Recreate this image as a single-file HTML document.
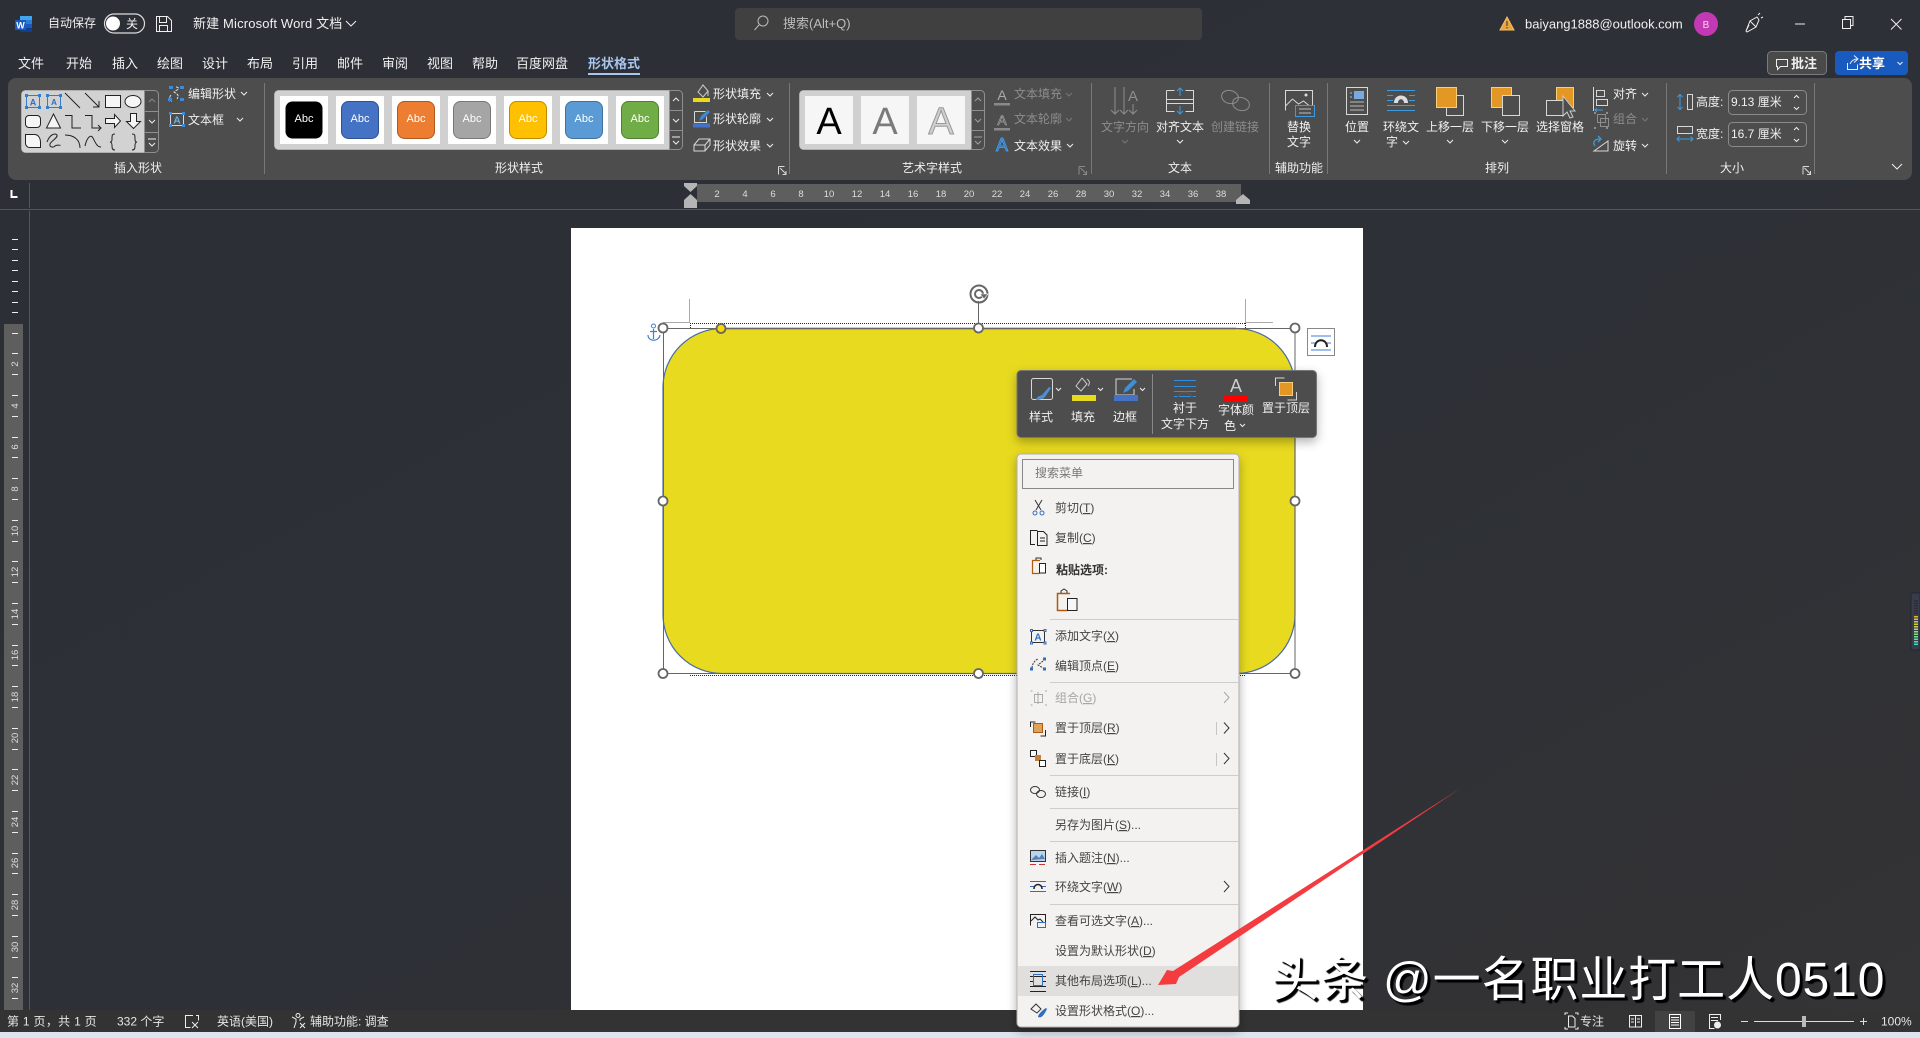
<!DOCTYPE html>
<html lang="zh"><head><meta charset="utf-8"><title>新建 Microsoft Word 文档</title>
<style>
html,body{margin:0;padding:0;width:1920px;height:1038px;overflow:hidden;background:#2c2f36}
svg{position:absolute;left:0;top:0;display:block}
text{font-family:"Liberation Sans","Noto Sans CJK SC",sans-serif;font-size:12px;fill:#f0f0f0}
.m{text-anchor:middle}
.d{fill:#8d8d8d}
.k{fill:#444}
.g{fill:#a8a6a4}
.c{fill:none;stroke:#eee;stroke-width:1}
.b{fill:none;stroke:#222;stroke-width:1}
.s{fill:none;stroke:#d8d8d8;stroke-width:1}
.i{fill:none;stroke:#333;stroke-width:1}
.sp{stroke:#777;stroke-width:1}
.u{text-decoration:underline}
.n{font-size:9.5px;fill:#ddd;text-anchor:middle}
.h{fill:#fff;stroke:#666;stroke-width:1.8}
#wm{position:absolute;left:1271px;top:948px;font:48px/66px "Liberation Sans","Noto Sans CJK SC",sans-serif;letter-spacing:.9px;color:#fff;white-space:pre;text-shadow:2px 2px 1px #000,3px 3px 1px #000}
</style></head><body>
<svg width="1920" height="1038" viewBox="0 0 1920 1038" xmlns="http://www.w3.org/2000/svg">
<defs><linearGradient id="bg" x1="0" y1="0" x2="1" y2="1"><stop offset="0" stop-color="#2c2f36"/><stop offset=".55" stop-color="#2d3036"/><stop offset="1" stop-color="#343335"/></linearGradient>
<filter id="sh" x="-10%" y="-20%" width="120%" height="150%"><feDropShadow dx="0" dy="4" stdDeviation="5" flood-color="#000" flood-opacity=".3"/></filter></defs>
<rect width="1920" height="1038" fill="url(#bg)"/>

<!-- title bar -->
<rect x="20" y="16" width="12" height="4" fill="#41a5ee"/><rect x="20" y="20" width="12" height="4" fill="#2b7cd3"/><rect x="20" y="24" width="12" height="4" fill="#185abd"/><rect x="20" y="28" width="12" height="4" fill="#103f91"/>
<rect x="15" y="20" width="11" height="10" fill="#185abd"/><text x="20.5" y="28.5" class="m" style="font-size:9px;font-weight:bold;fill:#fff">W</text>
<text x="48" y="27">自动保存</text>
<rect x="104.500" y="14" width="40" height="19" rx="9.500" fill="#2c2f36" stroke="#ddd" stroke-width="1.200"/><circle cx="113" cy="23.500" r="7" fill="#fff"/><text x="126" y="28">关</text>
<path d="M156.500 16.500h11l4 4v11h-15zM159.500 16.500v6h7v-6M159.500 31.500v-6h8v6" class="c"/>
<text x="193" y="28" style="font-size:13px;letter-spacing:.15px">新建 Microsoft Word 文档</text>
<path d="M346 21l5 5 5-5" class="c" stroke-width="1.300"/>
<rect x="735" y="8" width="467" height="32" rx="4" fill="#404040"/>
<circle cx="763" cy="21" r="5" fill="none" stroke="#bbb"/><path d="M759 25l-4.500 5" stroke="#bbb" fill="none"/>
<text x="783" y="28" style="fill:#bdbdbd;font-size:13px">搜索(Alt+Q)</text>
<path d="M1507 17l7 13h-14z" fill="#e8a33d" stroke="#f4bf6a"/><rect x="1506.500" y="21" width="1" height="5" fill="#333"/><rect x="1506.500" y="27" width="1" height="1.500" fill="#333"/>
<text x="1525" y="28.500" style="font-size:13px">baiyang1888@outlook.com</text>
<circle cx="1706" cy="24" r="12" fill="#c239b3"/><text x="1706" y="28" class="m" style="font-size:10px;fill:#f5d5f0">B</text>
<path d="M1746 31l4-10 7-4 2 3-3 7-9 5zM1750 21l6 6M1758 15l2-2M1761 18l2-1M1746 31l3-6" class="c"/>
<path d="M1795 24h10" class="c"/>
<path d="M1842.500 19.500h8v9h-8zM1845 19v-2.500h8v9h-2.500" class="c"/>
<path d="M1891 19l10.500 10.500M1901.500 19l-10.500 10.500" class="c"/>

<!-- tabs -->
<g style="font-size:13px">
<text x="18" y="68" style="font-size:13px">文件</text><text x="66" y="68" style="font-size:13px">开始</text><text x="112" y="68" style="font-size:13px">插入</text><text x="157" y="68" style="font-size:13px">绘图</text><text x="202" y="68" style="font-size:13px">设计</text><text x="247" y="68" style="font-size:13px">布局</text><text x="292" y="68" style="font-size:13px">引用</text><text x="337" y="68" style="font-size:13px">邮件</text><text x="382" y="68" style="font-size:13px">审阅</text><text x="427" y="68" style="font-size:13px">视图</text><text x="472" y="68" style="font-size:13px">帮助</text><text x="516" y="68" style="font-size:13px">百度网盘</text><text x="588" y="68" style="font-size:13px;fill:#a9c6ee;font-weight:bold">形状格式</text>
</g>
<rect x="588" y="73" width="52" height="2" fill="#a9c6ee"/>
<rect x="1767.500" y="51.500" width="59" height="23" rx="4" fill="#4a4a4a" stroke="#7a7a7a"/>
<path d="M1776.500 59.500h11v7h-7l-3 3v-3h-1z" class="c"/><text x="1791" y="68" style="font-size:13px;font-weight:bold">批注</text>
<rect x="1835" y="51" width="73" height="24" rx="4" fill="#185abd"/>
<path d="M1847.500 63v6.500h10v-5M1850 64c1-3 4-5 7-5M1854 55.500l4 3.500-4 3.500" class="c"/><text x="1859" y="68" style="font-size:13px;font-weight:bold;fill:#fff">共享</text>
<path d="M1897.500 62l2.500 2.500 2.500-2.500" class="c"/>

<!-- ribbon -->
<rect x="8" y="78" width="1904" height="102" rx="8" fill="#4d4d4d"/>
<g class="sp"><path d="M264.500 83v91M789.500 83v91M1091.500 83v91M1269.500 83v91M1327.500 83v91M1666.500 83v91M1814.500 83v91"/></g>

<!-- shape gallery -->
<rect x="21.500" y="90.500" width="137" height="62" rx="4" fill="#4d4d4d" stroke="#8f8f8f"/>
<path d="M25.500 90.500h118.500v62h-118.500a4 4 0 0 1-4-4v-54a4 4 0 0 1 4-4z" fill="#d2d2d2"/>
<g class="b">
<rect x="26.500" y="95.500" width="13" height="12" stroke="#2f7fd0"/><rect x="47.500" y="95.500" width="13" height="12" stroke="#2f7fd0"/>
<path d="M65 93l15 15M85 93l14 14M99 101v6h-6"/>
<rect x="105.500" y="95.500" width="15" height="12" fill="#f5f5f5"/><ellipse cx="133" cy="101.500" rx="8" ry="6" fill="#f5f5f5"/>
<rect x="25.500" y="115.500" width="15" height="12" rx="3.500" fill="#f5f5f5"/><path d="M53.500 114l7 14h-14z" fill="#f5f5f5"/>
<path d="M65 115.500h7v12.500h9M85 115.500h7v12.500h9M98 125l3 3-3 3"/>
<path d="M105.500 118.500h9v-4l6 6.500-6 6.500v-4h-9z" fill="#f5f5f5"/><path d="M130.500 113.500h6v8h4l-7 7-7-7h4z" fill="#f5f5f5"/>
<path d="M25.500 134.500h9c4 0 6 4 6 8v5h-11c-2 0-4-2-4-4z" fill="#f5f5f5"/>
<path d="M47 142c3-8 8-9 10-7 1 3-6 6-7 9s3 4 5 2 6 0 5-1"/>
<path d="M65 135c8 0 15 4 15 13M85 146c2-9 6-12 8-8s4 9 8 9"/>
<path d="M115 134c-3 0-3 1-3 5s-2 3-2 3 2 0 2 3 0 5 3 5M132 134c3 0 3 1 3 5s2 3 2 3-2 0-2 3 0 5-3 5"/>
</g>
<text x="33" y="105.500" class="m" style="font-size:9px;font-weight:bold;fill:#2f6fc0">A</text><text x="54" y="105" class="m" style="font-size:8px;font-weight:bold;fill:#2f6fc0">A</text>
<g fill="#2f7fd0"><rect x="25" y="94" width="3" height="3"/><rect x="38" y="94" width="3" height="3"/><rect x="25" y="106" width="3" height="3"/><rect x="38" y="106" width="3" height="3"/><rect x="46" y="94" width="3" height="3"/><rect x="59" y="94" width="3" height="3"/><rect x="46" y="106" width="3" height="3"/><rect x="59" y="106" width="3" height="3"/></g>
<path d="M144.500 111.500h14M144.500 132.500h14M144.500 90v62" stroke="#8f8f8f" fill="none"/>
<path d="M149 102l3-3 3 3" fill="none" stroke="#8a8a8a"/><path d="M149 120l3 3 3-3" class="c"/><path d="M148 139h8M149 143l3 3 3-3" class="c"/>
<!-- edit shape -->
<path d="M171 95c-2 3-3 6-1 6h2M176 87c3 0 3 2 1 3l-3 2 3 2c2 2 1 3 0 5" fill="none" stroke="#ddd" stroke-dasharray="3 1"/>
<g fill="#3a8ad8"><rect x="169" y="86" width="4" height="3"/><rect x="180" y="86" width="4" height="3"/><rect x="168" y="98" width="4" height="3"/><rect x="180" y="98" width="4" height="3"/></g>
<text x="188" y="98">编辑形状</text><path d="M241 92l3 3 3-3" class="c"/>
<rect x="170.500" y="113.500" width="13" height="12" class="s"/><text x="177" y="123.500" class="m" style="font-size:10px;font-weight:bold;fill:#6cb1ea">A</text>
<g fill="#3a8ad8"><rect x="169" y="112" width="3" height="3"/><rect x="182" y="112" width="3" height="3"/><rect x="169" y="124" width="3" height="3"/><rect x="182" y="124" width="3" height="3"/></g>
<text x="188" y="124">文本框</text><path d="M237 118l3 3 3-3" class="c"/>
<text x="138" y="172" class="m">插入形状</text>

<!-- style gallery -->
<rect x="274.500" y="90.500" width="408" height="59" rx="4" fill="#4d4d4d" stroke="#8f8f8f"/>
<path d="M278.500 90.500h390.500v59h-390.500a4 4 0 0 1-4-4v-51a4 4 0 0 1 4-4z" fill="#d0d0d0"/>
<g fill="#fff"><rect x="280" y="96" width="48" height="48"/><rect x="336" y="96" width="48" height="48"/><rect x="392" y="96" width="48" height="48"/><rect x="448" y="96" width="48" height="48"/><rect x="504" y="96" width="48" height="48"/><rect x="560" y="96" width="48" height="48"/><rect x="616" y="96" width="48" height="48"/></g>
<rect x="285.500" y="101.500" width="37" height="37" rx="7" fill="#000"/>
<rect x="341.500" y="101.500" width="37" height="37" rx="7" fill="#4472c4" stroke="#2f528f"/>
<rect x="397.500" y="101.500" width="37" height="37" rx="7" fill="#ed7d31" stroke="#ae5a21"/>
<rect x="453.500" y="101.500" width="37" height="37" rx="7" fill="#a5a5a5" stroke="#787878"/>
<rect x="509.500" y="101.500" width="37" height="37" rx="7" fill="#ffc000" stroke="#bc8c00"/>
<rect x="565.500" y="101.500" width="37" height="37" rx="7" fill="#5b9bd5" stroke="#41719c"/>
<rect x="621.500" y="101.500" width="37" height="37" rx="7" fill="#70ad47" stroke="#507e32"/>
<g style="font-size:11px"><text x="304" y="122" class="m" style="font-size:11px;fill:#fff">Abc</text><text x="360" y="122" class="m" style="font-size:11px;fill:#fff">Abc</text><text x="416" y="122" class="m" style="font-size:11px;fill:#fff">Abc</text><text x="472" y="122" class="m" style="font-size:11px;fill:#fff">Abc</text><text x="528" y="122" class="m" style="font-size:11px;fill:#fff">Abc</text><text x="584" y="122" class="m" style="font-size:11px;fill:#fff">Abc</text><text x="640" y="122" class="m" style="font-size:11px;fill:#fff">Abc</text></g>
<path d="M669.500 110.500h13M669.500 130.500h13M669.500 90v60" stroke="#8f8f8f" fill="none"/>
<path d="M673 101l3-3 3 3M673 119l3 3 3-3M672 137h8M673 141l3 3 3-3" class="c"/>
<!-- fill/outline/effects -->
<path d="M698 92l5-7 5 6-5 6zM708 91v5" fill="none" stroke="#ccc"/><rect x="693" y="98" width="17" height="4" fill="#e8da1f"/><text x="713" y="98">形状填充</text><path d="M767 93l3 3 3-3" class="c"/>
<path d="M694.500 111.500h11M694.500 111.500v11h12v-6" class="s"/><path d="M699 121l2-5 7-6 2 2-7 7z" fill="#3a8ad8"/><rect x="693" y="123.500" width="17" height="4" fill="#4472c4"/><text x="713" y="123">形状轮廓</text><path d="M767 118l3 3 3-3" class="c"/>
<path d="M694 145l5-6h11v6l-5 6h-11zM694 145h11v6M705 145l5-6" class="s" fill="#aaa"/><text x="713" y="150">形状效果</text><path d="M767 144l3 3 3-3" class="c"/>
<path d="M778.500 166.500h6M778.500 166.500v8M780 168l6 6M786 171v3.500h-3.500" class="s" stroke="#bbb"/>
<text x="519" y="172" class="m">形状样式</text>

<!-- wordart -->
<rect x="799.500" y="90.500" width="185" height="59" rx="4" fill="#4d4d4d" stroke="#8f8f8f"/>
<path d="M803.500 90.500h167.500v59h-167.500a4 4 0 0 1-4-4v-51a4 4 0 0 1 4-4z" fill="#d0d0d0"/>
<g fill="#f6f6f6"><rect x="805" y="96" width="48" height="48"/><rect x="861" y="96" width="48" height="48"/><rect x="917" y="96" width="48" height="48"/></g>
<text x="829" y="134" class="m" style="font-size:38px;fill:#000">A</text>
<text x="885" y="134" class="m" style="font-size:38px;fill:#7b7b7b">A</text>
<text x="941" y="134" class="m" style="font-size:38px;fill:#cfcfcf;stroke:#999;stroke-width:1">A</text>
<path d="M971.500 110.500h13M971.500 130.500h13M971.500 90v60" stroke="#8f8f8f" fill="none"/>
<path d="M975 101l3-3 3 3M975 119l3 3 3-3M974 137h8M975 141l3 3 3-3" stroke="#a0a0a0" fill="none"/>
<text x="1002" y="100" class="m" style="font-size:14px;fill:#aaa">A</text><rect x="994" y="103" width="16" height="2.500" fill="#8a8a8a"/><text x="1014" y="98" class="d">文本填充</text><path d="M1066 93l3 3 3-3" stroke="#777" fill="none"/>
<text x="1002" y="125" class="m" style="font-size:14px;fill:none;stroke:#aaa;stroke-width:.6">A</text><rect x="994" y="128" width="16" height="2.500" fill="#8a8a8a"/><text x="1014" y="123" class="d">文本轮廓</text><path d="M1066 118l3 3 3-3" stroke="#777" fill="none"/>
<text x="1002" y="151" class="m" style="font-size:18px;fill:#2a6fb0;stroke:#4aa3ee;stroke-width:.8">A</text><text x="1014" y="150">文本效果</text><path d="M1067 144l3 3 3-3" class="c"/>
<path d="M1079 166.500h6M1079 166.500v8M1080.500 168l6 6M1086.500 171v3.500h-3.500" stroke="#8a8a8a" fill="none"/>
<text x="932" y="172" class="m">艺术字样式</text>

<!-- text group -->
<path d="M1115 87v27M1111 110l4 4 4-4M1124 87v27M1120 110l4 4 4-4M1133 104v10M1129 110l4 4 4-4" stroke="#8d8d8d" fill="none"/><text x="1133" y="101" class="m" style="font-size:15px;fill:#8d8d8d">A</text>
<text x="1125" y="131" class="m d">文字方向</text><path d="M1122 140l3 3 3-3" stroke="#777" fill="none"/>
<path d="M1166.500 90.500h8M1185.500 90.500h8v21h-8M1174.500 111.500h-8v-21M1166.500 99.500h27M1166.500 103.500h27" class="s"/><path d="M1180 96v-8M1177 91l3-3 3 3M1180 106v8M1177 111l3 3 3-3" fill="none" stroke="#3a9be0"/>
<text x="1180" y="131" class="m">对齐文本</text><path d="M1177 140l3 3 3-3" class="c"/>
<ellipse cx="1230" cy="97" rx="8.500" ry="6.500" transform="rotate(15 1230 97)" stroke="#8d8d8d" fill="none"/><ellipse cx="1241" cy="104" rx="8.500" ry="6.500" transform="rotate(15 1241 104)" stroke="#8d8d8d" fill="none"/>
<text x="1235" y="131" class="m d">创建链接</text>
<text x="1180" y="172" class="m">文本</text>

<!-- alt text -->
<path d="M1285.500 110.500v-20h27v16M1285.500 106l7-7 6 5 5-3 6 5" class="s"/><circle cx="1306" cy="95" r="1.500" fill="#ddd"/><rect x="1295.500" y="105.500" width="19" height="11" fill="#4d4d4d" stroke="#3a9be0"/><path d="M1299 109h12M1299 113h12" stroke="#bbb"/>
<text x="1299" y="131" class="m">替换</text><text x="1299" y="146" class="m">文字</text>
<text x="1299" y="172" class="m">辅助功能</text>

<!-- arrange -->
<rect x="1346.500" y="87.500" width="21" height="27" class="s"/><rect x="1354" y="91" width="10" height="8" fill="#7aa9de"/><path d="M1350 93h2M1350 97h2M1350 102h14M1350 106h14M1350 110h14" stroke="#bbb"/>
<text x="1357" y="131" class="m">位置</text><path d="M1354 140l3 3 3-3" class="c"/>
<path d="M1387 90.500h28M1387 95.500h6M1409 95.500h6M1387 100.500h6M1409 100.500h6M1387 105.500h28M1387 110.500h28" stroke="#3a9be0" fill="none"/><path d="M1394 103c0-10 14-10 14 0h-4c0-5-6-5-6 0z" fill="#ddd"/>
<text x="1401" y="131" class="m">环绕文</text><text x="1392" y="146" class="m">字</text><path d="M1403 141l3 3 3-3" class="c"/>
<rect x="1446.500" y="95.500" width="17" height="20" class="s"/><rect x="1436.500" y="87.500" width="20" height="20" fill="#e39725" stroke="#f6cf7c"/>
<text x="1450" y="131" class="m">上移一层</text><path d="M1447 140l3 3 3-3" class="c"/>
<rect x="1491.500" y="87.500" width="20" height="20" fill="#e39725" stroke="#f6cf7c"/><rect x="1502.500" y="95.500" width="17" height="20" fill="#4d4d4d" stroke="#d8d8d8"/>
<text x="1505" y="131" class="m">下移一层</text><path d="M1502 140l3 3 3-3" class="c"/>
<rect x="1556.500" y="87.500" width="17" height="20" fill="#e39725" stroke="#f6cf7c"/><rect x="1546.500" y="100.500" width="17" height="15" fill="#4d4d4d" stroke="#d8d8d8"/>
<path d="M1563 96v20l4-4 3 6 3-1-3-6h5z" fill="#4d4d4d" stroke="#ccc"/>
<text x="1560" y="131" class="m">选择窗格</text>
<path d="M1593.500 87v24" class="s"/><rect x="1596.500" y="90.500" width="8" height="6" class="s"/><rect x="1596.500" y="99.500" width="11" height="6" class="s"/><path d="M1595 110h8M1597 108l-2 2 2 2" stroke="#3a9be0" fill="none"/>
<text x="1613" y="98">对齐</text><path d="M1642 93l3 3 3-3" class="c"/>
<path d="M1594 112h2v2h-2zM1594 127h2v2h-2zM1606 112h2v2h-2zM1606 127h2v2h-2z" fill="#8d8d8d"/><rect x="1597.500" y="114.500" width="8" height="8" stroke="#8d8d8d" fill="none"/><rect x="1600.500" y="118.500" width="8" height="8" stroke="#8d8d8d" fill="none"/>
<text x="1613" y="123" class="d">组合</text><path d="M1642 118l3 3 3-3" stroke="#777" fill="none"/>
<path d="M1594 151l14-10v10z" class="s"/><path d="M1595 146c-3-4 0-7 5-7M1598 136l3 3-3 3" stroke="#3a9be0" fill="none" stroke-width="1.300"/>
<text x="1613" y="150">旋转</text><path d="M1642 144l3 3 3-3" class="c"/>
<text x="1497" y="172" class="m">排列</text>

<!-- size -->
<rect x="1687.500" y="94.500" width="5" height="15" class="s"/><path d="M1680 95v14M1677.500 97l2.500-2.500 2.500 2.500M1677.500 107l2.500 2.500 2.500-2.500" stroke="#3a9be0" fill="none"/>
<text x="1696" y="106">高度:</text>
<rect x="1728.500" y="90.500" width="78" height="24" rx="4" fill="#4d4d4d" stroke="#8a8a8a"/><text x="1731" y="106">9.13 厘米</text><path d="M1794 98l2.500-2.500 2.500 2.500M1794 107l2.500 2.500 2.500-2.500" class="c"/>
<rect x="1677.500" y="126.500" width="15" height="7" class="s"/><path d="M1677 139h16M1679.500 136.500l-2.500 2.500 2.500 2.500M1690.500 136.500l2.500 2.500-2.500 2.500" stroke="#3a9be0" fill="none"/>
<text x="1696" y="138">宽度:</text>
<rect x="1728.500" y="122.500" width="78" height="24" rx="4" fill="#4d4d4d" stroke="#8a8a8a"/><text x="1731" y="138">16.7 厘米</text><path d="M1794 130l2.500-2.500 2.500 2.500M1794 139l2.500 2.500 2.500-2.500" class="c"/>
<text x="1732" y="172" class="m">大小</text>
<path d="M1803 166.500h6M1803 166.500v8M1804.500 168l6 6M1810.500 171v3.500h-3.500" class="s"/>
<path d="M1892 164l5 5 5-5" class="c" stroke-width="1.300"/>

<!-- h ruler -->
<rect x="697" y="184" width="544" height="18" fill="#5e5e5e"/>
<path d="M684 183h13v3l-6.500 6-6.500-6z" fill="#b5b5b5"/><path d="M690.500 194l6.500 6v8h-13v-8z" fill="#b5b5b5"/>
<path d="M1236 204v-4l7-6 7 6v4z" fill="#b5b5b5"/>
<text x="717" y="197" class="n">2</text><text x="745" y="197" class="n">4</text><text x="773" y="197" class="n">6</text><text x="801" y="197" class="n">8</text><text x="829" y="197" class="n">10</text><text x="857" y="197" class="n">12</text><text x="885" y="197" class="n">14</text><text x="913" y="197" class="n">16</text><text x="941" y="197" class="n">18</text><text x="969" y="197" class="n">20</text><text x="997" y="197" class="n">22</text><text x="1025" y="197" class="n">24</text><text x="1053" y="197" class="n">26</text><text x="1081" y="197" class="n">28</text><text x="1109" y="197" class="n">30</text><text x="1137" y="197" class="n">32</text><text x="1165" y="197" class="n">34</text><text x="1193" y="197" class="n">36</text><text x="1221" y="197" class="n">38</text>
<path d="M0 209.500h1920" stroke="#565656"/>
<path d="M29.500 183v25M29.500 211v799" stroke="#565656"/>
<path d="M11.500 190v7h6" fill="none" stroke="#fff" stroke-width="2"/>

<!-- v ruler -->
<rect x="4" y="324" width="19" height="686" fill="#5e5e5e"/>
<path d="M12 239.500h6M12 249.500h6M12 260.500h6M12 270.500h6M12 281.500h6M12 291.500h6M12 302.500h6M12 312.500h6M12 333.500h6M12 353.500h6M12 374.500h6M12 395.500h6M12 416.500h6M12 437.500h6M12 457.500h6M12 478.500h6M12 499.500h6M12 520.500h6M12 541.500h6M12 561.500h6M12 582.500h6M12 603.500h6M12 624.500h6M12 645.500h6M12 665.500h6M12 686.500h6M12 707.500h6M12 728.500h6M12 749.500h6M12 769.500h6M12 790.500h6M12 811.500h6M12 832.500h6M12 853.500h6M12 873.500h6M12 894.500h6M12 915.500h6M12 936.500h6M12 957.500h6M12 977.500h6M12 998.500h6" stroke="#eee" fill="none"/>
<g>
<text transform="translate(18 364) rotate(-90)" class="n">2</text><text transform="translate(18 406) rotate(-90)" class="n">4</text><text transform="translate(18 447) rotate(-90)" class="n">6</text><text transform="translate(18 489) rotate(-90)" class="n">8</text><text transform="translate(18 531) rotate(-90)" class="n">10</text><text transform="translate(18 572) rotate(-90)" class="n">12</text><text transform="translate(18 614) rotate(-90)" class="n">14</text><text transform="translate(18 655) rotate(-90)" class="n">16</text><text transform="translate(18 697) rotate(-90)" class="n">18</text><text transform="translate(18 738) rotate(-90)" class="n">20</text><text transform="translate(18 780) rotate(-90)" class="n">22</text><text transform="translate(18 822) rotate(-90)" class="n">24</text><text transform="translate(18 863) rotate(-90)" class="n">26</text><text transform="translate(18 905) rotate(-90)" class="n">28</text><text transform="translate(18 947) rotate(-90)" class="n">30</text><text transform="translate(18 988) rotate(-90)" class="n">32</text>
</g>

<!-- page -->
<rect x="571" y="228" width="792" height="782" fill="#fff"/>
<path d="M689.500 299v24M663 322.500h27M1245.500 299v24M1245 322.500h28" stroke="#aaa" fill="none"/>
<path d="M690 323.500h555M690 675.500h555M690.500 323v5M1245.500 323v5" stroke="#222" stroke-dasharray="1 1" fill="none"/>
<rect x="663" y="328.500" width="632" height="345" rx="59" fill="#e8da1f" stroke="#4a6ca8" stroke-width="1.200"/>
<path d="M722 328.500h514" stroke="#3f62a0" stroke-width="1.500"/>
<rect x="663.500" y="328.500" width="631.500" height="345" fill="none" stroke="#666"/>
<path d="M978.500 301v27" stroke="#666"/>
<circle cx="979" cy="294" r="8.500" fill="none" stroke="#666" stroke-width="2"/><circle cx="979" cy="294" r="4" fill="none" stroke="#666" stroke-width="2"/><path d="M980 294h8l-4 5z" fill="#666" stroke="#fff" stroke-width=".6"/>
<circle class="h" cx="663" cy="328" r="4.500"/><circle class="h" cx="978.500" cy="328" r="4.500"/><circle class="h" cx="1295" cy="328" r="4.500"/><circle class="h" cx="663" cy="501" r="4.500"/><circle class="h" cx="1295" cy="501" r="4.500"/><circle class="h" cx="663" cy="673.500" r="4.500"/><circle class="h" cx="978.500" cy="673.500" r="4.500"/><circle class="h" cx="1295" cy="673.500" r="4.500"/>
<circle cx="721" cy="328.500" r="4.500" fill="#ffd800" stroke="#666" stroke-width="1.800"/>
<path d="M653.500 329v10M648 335c0 7 11 7 12 0M650 331.500h7" stroke="#3f7fd0" fill="none" stroke-width="1.200"/><circle cx="653.500" cy="326" r="2" fill="none" stroke="#3f7fd0"/>
<rect x="1307.500" y="328.500" width="27" height="27" fill="#fff" stroke="#888"/><path d="M1311 336h20M1311 350h20M1311 343h4M1327 343h4" stroke="#3f7fd0" fill="none"/><path d="M1315 347c0-9 12-9 12 0" stroke="#222" stroke-width="2" fill="none"/>

<!-- status bar -->
<rect x="0" y="1010" width="1920" height="22" fill="#333"/>
<rect x="0" y="1032" width="1920" height="6" fill="#dde4ef"/>
<text x="7" y="1025.500" style="fill:#e6e6e6;letter-spacing:.3px">第 1 页，共 1 页</text>
<text x="117" y="1025.500" style="fill:#e6e6e6">332 个字</text>
<path d="M193 1015.500h-7.500v12h5M196 1015.500l2.500 0v5M192 1022l6 6M198 1022l-6 6" class="c"/>
<text x="217" y="1025.500" style="fill:#e6e6e6">英语(美国)</text>
<circle cx="298" cy="1015.500" r="2" fill="none" stroke="#eee"/><path d="M292 1017l4 2v3l-2 6M304 1017l-4 2v2M300 1023l5 5M305 1023l-5 5" class="c"/>
<text x="310" y="1025.500" style="fill:#e6e6e6">辅助功能: 调查</text>
<path d="M1565 1015v-2h3M1578 1015v-2h-3M1565 1027v2h3M1578 1027v2h-3M1568.500 1016h4l2.500 2.500v8.500h-6.500z" class="c"/>
<text x="1580" y="1025.500" style="fill:#e6e6e6">专注</text>
<path d="M1629.500 1015.500h6v11.500h-6zM1635.500 1015.500h6v11.500h-6zM1631 1019h3M1631 1022h3M1637 1019h3M1637 1022h3" class="c"/>
<rect x="1655" y="1011" width="40" height="21" fill="#424242"/>
<rect x="1669.500" y="1014.500" width="11" height="14" fill="none" stroke="#fff"/><path d="M1671 1017.500h8M1671 1020h8M1671 1022.500h8M1671 1025h8" stroke="#fff" fill="none"/>
<path d="M1720.500 1020v-5.500h-11v14h5M1711 1017.500h7M1711 1020.500h7" class="c"/><circle cx="1717.500" cy="1025" r="3.500" fill="#eee"/>
<path d="M1741 1021.500h7M1754 1021.500h100M1860 1021.500h7M1863.500 1018v7" stroke="#ddd" fill="none"/><rect x="1802" y="1016" width="4" height="11" fill="#bbb"/>
<text x="1881" y="1025.500" style="fill:#e6e6e6">100%</text>

<!-- mini toolbar -->
<g filter="url(#sh)"><rect x="1017" y="370.500" width="299.500" height="67" rx="4" fill="#4d4d4d" stroke="#777"/></g>
<path d="M1152.500 374v60" stroke="#888"/>
<rect x="1031.500" y="378.500" width="21" height="21" rx="2" class="s"/><path d="M1036 400c1-4 4-4 6-5l7-8 2 1-6 9c-2 2-6 3-9 3z" fill="#4d8fd0"/><path d="M1056 388l2.500 2.500 2.500-2.500" class="c"/>
<text x="1041" y="421" class="m">样式</text>
<path d="M1076 386l6-8 5 6-6 7zM1087 379c3 2 3 5 1 7" stroke="#ccc" fill="none"/><rect x="1072" y="395" width="24" height="6" fill="#e8da1f"/><path d="M1098 388l2.500 2.500 2.500-2.500" class="c"/>
<text x="1083" y="421" class="m">填充</text>
<path d="M1132 379h-16v16h18v-6" class="s"/><path d="M1123 393l2-5 9-9 3 3-9 9z" fill="#3d8fd8"/><rect x="1114" y="395" width="24" height="6" fill="#4472c4"/><path d="M1140 388l2.500 2.500 2.500-2.500" class="c"/>
<text x="1125" y="421" class="m">边框</text>
<path d="M1174 380.500h22M1174 386.500h22M1174 391.500h22M1174 396.500h22" stroke="#2f8fe0" fill="none"/><path d="M1178 398c0-7 14-7 14 0" stroke="#555" stroke-width="2" fill="none"/>
<text x="1185" y="412" class="m">衬于</text><text x="1185" y="428" class="m">文字下方</text>
<text x="1236" y="392" class="m" style="font-size:18px;fill:#ccc">A</text><rect x="1224" y="395" width="24" height="6" fill="#f00"/>
<text x="1236" y="414" class="m">字体颜</text><text x="1230" y="430" class="m">色</text><path d="M1240 424l2.500 2.500 2.500-2.500" class="c"/>
<path d="M1275.500 386v-8h9M1296.500 392v8h-9" class="s"/><rect x="1279.500" y="382.500" width="13" height="13" fill="#e39725" stroke="#f6cf7c"/>
<text x="1286" y="412" class="m">置于顶层</text>

<!-- context menu -->
<g filter="url(#sh)"><rect x="1017" y="454" width="222" height="573" rx="4" fill="#f3f2f1" stroke="#b3b0ad"/></g>
<rect x="1022.500" y="459.500" width="211" height="29" fill="#f3f2f1" stroke="#8a8886"/>
<text x="1035" y="477" style="fill:#7a7876">搜索菜单</text>
<rect x="1018" y="966" width="220" height="30" fill="#e1dfdd"/>
<path d="M1050 619.500h188M1050 682.500h188M1050 775.500h188M1050 808.500h188M1050 841.500h188M1050 904.500h188" stroke="#cfcdcb"/>
<path d="M1216.500 722v13M1216.500 753v13" stroke="#c8c6c4"/>
<path d="M1224 692l5 5.500-5 5.500" stroke="#a8a6a4" fill="none"/><path d="M1224 722.500l5 5.500-5 5.500M1224 753l5 5.500-5 5.500M1224 881l5 5.500-5 5.500" stroke="#333" fill="none"/>
<text x="1055" y="512" class="k">剪切(<tspan class="u">T</tspan>)</text>
<text x="1055" y="542" class="k">复制(<tspan class="u">C</tspan>)</text>
<text x="1056" y="574" style="fill:#333;font-weight:bold">粘贴选项:</text>
<text x="1055" y="640" class="k">添加文字(<tspan class="u">X</tspan>)</text>
<text x="1055" y="670" class="k">编辑顶点(<tspan class="u">E</tspan>)</text>
<text x="1055" y="702" class="g">组合(<tspan class="u">G</tspan>)</text>
<text x="1055" y="732" class="k">置于顶层(<tspan class="u">R</tspan>)</text>
<text x="1055" y="763" class="k">置于底层(<tspan class="u">K</tspan>)</text>
<text x="1055" y="796" class="k">链接(<tspan class="u">I</tspan>)</text>
<text x="1055" y="829" class="k">另存为图片(<tspan class="u">S</tspan>)...</text>
<text x="1055" y="862" class="k">插入题注(<tspan class="u">N</tspan>)...</text>
<text x="1055" y="891" class="k">环绕文字(<tspan class="u">W</tspan>)</text>
<text x="1055" y="925" class="k">查看可选文字(<tspan class="u">A</tspan>)...</text>
<text x="1055" y="955" class="k">设置为默认形状(<tspan class="u">D</tspan>)</text>
<text x="1055" y="985" class="k">其他布局选项(<tspan class="u">L</tspan>)...</text>
<text x="1055" y="1015" class="k">设置形状格式(<tspan class="u">O</tspan>)...</text>
<!-- menu icons -->
<path d="M1035 500l6 10M1042 500l-6 10" class="i"/><circle cx="1035" cy="513" r="2" fill="none" stroke="#2f6fc0"/><circle cx="1042" cy="513" r="2" fill="none" stroke="#2f6fc0"/>
<path d="M1035 544.500h-4.500v-14h7M1037.500 534.500v-3h6l3.500 3.500v10.500h-9.500v-11M1040 538h5M1040 541h5" class="b"/>
<path d="M1040 560.500h-7.500v13h7" fill="none" stroke="#b05a10" stroke-width="1.200"/><path d="M1036 560v-2h5v2" stroke="#333" fill="none"/><rect x="1039.500" y="563.500" width="6" height="9.500" fill="#fff" stroke="#222"/>
<path d="M1070 593.500h-12.500v17h10" fill="none" stroke="#b05a10" stroke-width="1.500"/><path d="M1061 593v-2l3-2 3 2v2" stroke="#333" fill="none"/><rect x="1067.500" y="598.500" width="9.500" height="12" fill="#f5f7f8" stroke="#222"/>
<rect x="1031.500" y="630.500" width="13" height="12" fill="none" stroke="#333"/><text x="1038" y="640.500" class="m" style="font-size:10px;font-weight:bold;fill:#2f6fc0">A</text><g fill="#f3f2f1" stroke="#2f6fc0"><rect x="1030.500" y="629.500" width="2" height="2"/><rect x="1044" y="629.500" width="2" height="2"/><rect x="1030.500" y="642" width="2" height="2"/><rect x="1044" y="642" width="2" height="2"/></g>
<path d="M1032 668c0-4 3-8 6-9M1043 661l-5 4 5 3" stroke="#333" fill="none" stroke-dasharray="2 1"/><g fill="#2f6fc0"><rect x="1043" y="657.500" width="3" height="3"/><rect x="1030" y="667.500" width="3" height="3"/><rect x="1043" y="667.500" width="3" height="3"/></g>
<rect x="1034.500" y="694.500" width="8" height="8" fill="none" stroke="#aaa"/><path d="M1030.500 691h2M1045 691h2M1030.500 705h2M1045 705h2M1038 692v12" stroke="#aaa" fill="none"/>
<path d="M1030.500 727v-5h5M1045.500 730v6h-5" class="b"/><rect x="1033.500" y="723.500" width="9" height="9" fill="#dfa25a" stroke="#b05a10"/>
<rect x="1030.500" y="750.500" width="6" height="6" fill="#fff" stroke="#222"/><rect x="1035" y="755" width="6" height="6" fill="#c97f36"/><rect x="1039.500" y="760.500" width="6" height="6" fill="#fff" stroke="#222"/>
<ellipse cx="1035" cy="790" rx="4.500" ry="3.500" fill="none" stroke="#333"/><ellipse cx="1041" cy="794" rx="4.500" ry="3.500" fill="none" stroke="#333"/>
<rect x="1030.500" y="850.500" width="15" height="11" fill="#b9d4ee" stroke="#333"/><path d="M1031 860l5-5 3 3 3-4 3 5z" fill="#5b7fb0"/><path d="M1030 864.500h6M1039 864.500h6" stroke="#c33"/>
<path d="M1030 881.500h16M1030 891.500h16M1030 886.500h4M1042 886.500h4" stroke="#2f6fc0" fill="none"/><path d="M1034 889c0-6 8-6 8 0" stroke="#222" stroke-width="1.500" fill="none"/>
<path d="M1030.500 925.500v-11h15v8M1031 921l4-4 3 3 2-1 3 3" class="b"/><rect x="1037.500" y="922.500" width="8" height="5" fill="#f3f2f1" stroke="#2f6fc0"/>
<path d="M1030 976.500h16M1030 986.500h16M1030 981.500h3M1043 981.500h3M1030 971.500h16M1030 991.500h16" class="b"/><rect x="1033.500" y="974.500" width="9" height="11" fill="none" stroke="#2f6fc0"/>
<path d="M1031 1009l5-5 5 5-4 4z" fill="none" stroke="#333"/><path d="M1038 1017c0-3 6-8 8-9l1 1c-2 4-5 10-9 8z" fill="#2f6fc0"/>

<!-- arrow -->
<path d="M1461 788L1173 971L1167 970L1158 985L1176 984L1179 977z" fill="#f43c40"/>

<!-- right tab -->
<path d="M1920 593h-7a2 2 0 0 0-2 2v53a2 2 0 0 0 2 2h7z" fill="#383d4e" stroke="#23262e"/>
<g fill="#2b2e38"><rect x="1914" y="600" width="4" height="1.500"/><rect x="1914" y="602.500" width="4" height="1.500"/><rect x="1914" y="605" width="4" height="1.500"/><rect x="1914" y="607.500" width="4" height="1.500"/><rect x="1914" y="610" width="4" height="1.500"/><rect x="1914" y="612.500" width="4" height="1.500"/></g>
<rect x="1914" y="616" width="4" height="1.500" fill="#e3b52a"/><rect x="1914" y="618.500" width="4" height="1.500" fill="#e3bd2e"/><rect x="1914" y="621" width="4" height="1.500" fill="#dfc435"/><rect x="1914" y="623.500" width="4" height="1.500" fill="#d6cc42"/><rect x="1914" y="626" width="4" height="1.500" fill="#c8d34e"/><rect x="1914" y="628.500" width="4" height="1.500" fill="#b3d85c"/><rect x="1914" y="631" width="4" height="1.500" fill="#9edc6c"/><rect x="1914" y="633.500" width="4" height="1.500" fill="#85e07e"/><rect x="1914" y="636" width="4" height="1.500" fill="#6de190"/><rect x="1914" y="638.500" width="4" height="1.500" fill="#58e2a2"/><rect x="1914" y="641" width="4" height="1.500" fill="#47e2b0"/><rect x="1914" y="643.500" width="4" height="1.500" fill="#3ae0b8"/>
</svg>
<div id="wm">头条 @一名职业打工人0510</div>
</body></html>
